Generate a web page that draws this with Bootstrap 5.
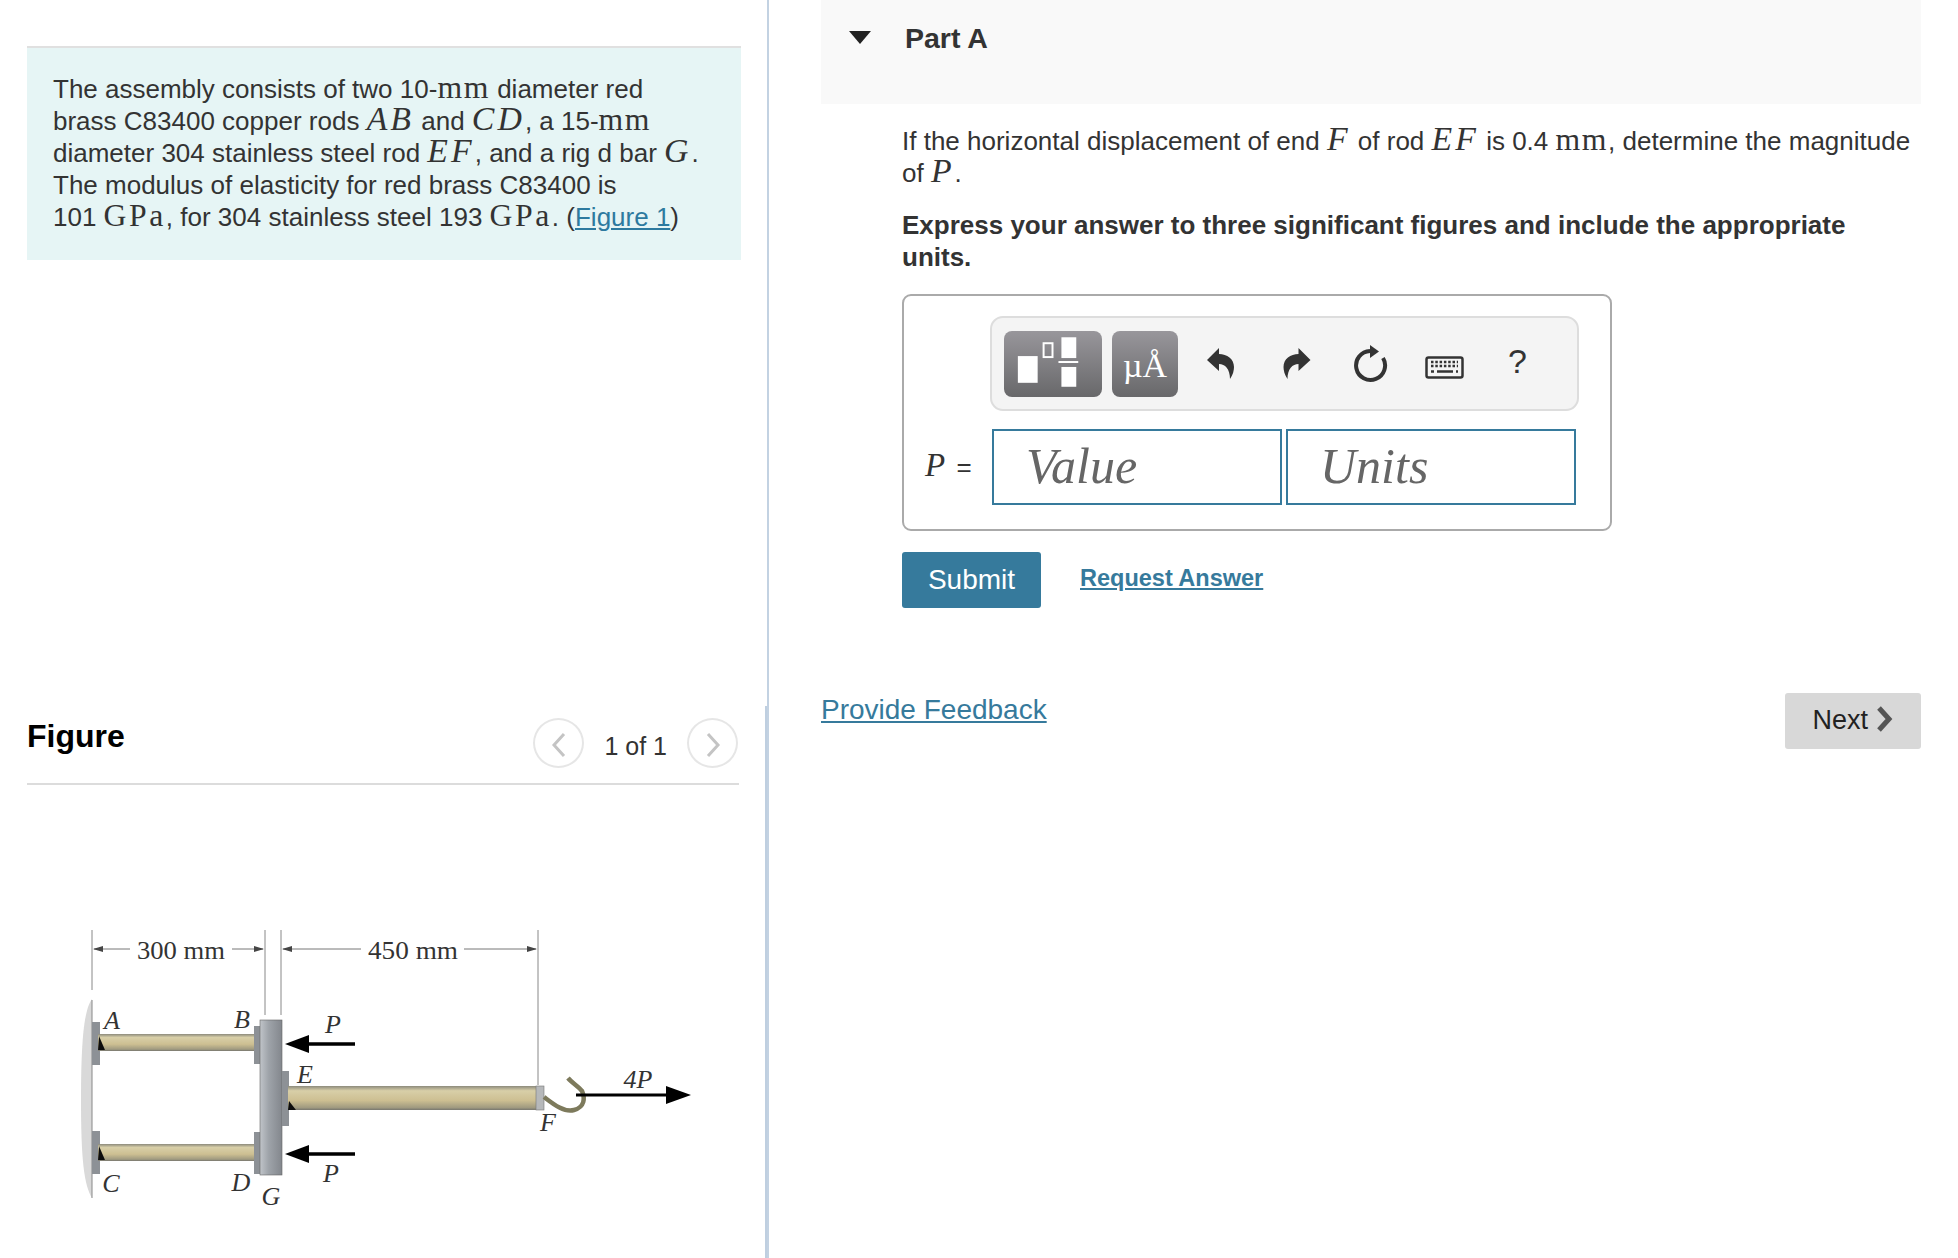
<!DOCTYPE html>
<html lang="en">
<head>
<meta charset="utf-8">
<title>Part A</title>
<link href="https://cdn.jsdelivr.net/npm/bootstrap@5.3.0/dist/css/bootstrap.min.css" rel="stylesheet">
<style>
html,body{height:100%}
body{font-family:"Liberation Sans",Arial,sans-serif;color:#333;font-size:26px;line-height:32px;background:#fff;overflow:hidden}
.stage{height:1258px}
.pane-left{width:769px;flex:none;padding:46px 0 0 27px;border-right:2px solid #c3d2e2;position:relative}
.pane-left::after{content:"";position:absolute;right:0;top:706px;bottom:0;width:2px;background:#bfcfe0}
.intro-box{width:714px;height:214px;background:#e6f5f5;border-top:2px solid #e0e0e0;padding:25px 26px}
.intro-box p{margin:0}
.mth{font-family:"Liberation Serif","Times New Roman",serif;font-size:1.22em;line-height:0;letter-spacing:.05em}
.mth-wide{letter-spacing:.08em}
.mvar{font-family:"Liberation Serif","Times New Roman",serif;font-style:italic;font-size:1.3em;letter-spacing:.09em;line-height:0}
.lnk{color:#2d7a9f;text-decoration:underline}
.fig-head{width:712px;height:100px;margin-top:425px;border-bottom:2px solid #dcdcdc;padding-bottom:15px}
.fig-title{font-weight:700;font-size:32px;color:#000;margin:0 0 14px;line-height:36px}
.pager-wrap{padding-right:1px}
.pager-btn{width:51px;height:50px;border:2px solid #e6e6e6;border-radius:50%;background:#fff;padding:0}
.pager-txt{margin:0 20px;font-size:25px;padding-top:6px}
.diagram{display:block;margin:125px 0 0 33px}
.pane-right{width:1189px;flex:none;padding:0 37px 0 52px}
.part-bar{height:104px;background:#f9f9f9;padding:20px 0 0 28px}
.tri-mark{margin-top:11px}
.part-title{font-size:28.500px;font-weight:700;color:#333;margin:0 0 0 34px;line-height:36px}
.part-body{padding:21px 4px 0 81px}
.part-body p{margin:0}
.emph{margin-top:20px!important;font-weight:700}
.answer-box{width:710px;height:237px;margin-top:21px;border:2px solid #aaa;border-radius:9px;padding:20px 0 0 21px}
.tool-strip{width:589px;height:95px;margin-left:65px;background:#f4f4f4;border:2px solid #ddd;border-radius:13px;padding:13px 12px}
.tool-btn{height:66px;border:0;border-radius:8px;background:linear-gradient(#98969b,#68686a);padding:0;color:#fff}
.tool-frac{width:98px}
.tool-unit{width:66px;margin-left:10px;font-family:"Liberation Serif",serif;font-size:34px;line-height:1;padding-top:5px}
.tool-ico{border:0;background:none;padding:0;line-height:0}
.eq-row{margin-top:18px}
.eq-lab{width:67px;font-size:26px;white-space:nowrap;line-height:1;margin-top:-4px}
.eq-lab i{font-family:"Liberation Serif",serif;font-size:33px;margin-right:4px}
.ans-input{width:290px!important;height:76px;flex:none;border:2px solid #367a9c;border-radius:0;font-family:"Liberation Serif",serif;font-style:italic;font-size:50px;padding:0 0 2px 32px;color:#666}
.ans-input::placeholder{color:#666;opacity:1}
.submit-btn{width:139px;height:56px;background:#367a9c;color:#fff;border:0;border-radius:3px;font-size:28px;line-height:32px;padding:0}
.req-link{font-size:23.500px;font-weight:700;margin:10px 0 0 39px;color:#367a9c}
.act-row{margin-top:21px}
.foot-row{margin-top:85px}
.fb-link{font-size:28px;color:#367a9c;margin-top:1px}
.next-btn{width:136px;height:56px;background:#d8d8d8;border:0;border-radius:3px;color:#222;font-size:27px;padding:0 0 2px}
.qmark{margin:-5px 0 0 44px;font-size:34px;line-height:1}
.ml-undo{margin-left:29px}.ml-redo{margin-left:49px}.ml-reset{margin-left:42px}.ml-key{margin-left:36px;margin-top:8px}
.chev{vertical-align:-3px}
</style>
</head>
<body>
<div class="stage d-flex">
  <div class="pane-left">
    <div class="intro-box">
      <p>The assembly consists of two 10-<span class="mth">mm</span> diameter red<br>
      brass C83400 copper rods <span class="mvar">AB</span> and <span class="mvar">CD</span>, a 15-<span class="mth">mm</span><br>
      diameter 304 stainless steel rod <span class="mvar">EF</span>, and a rig d bar <span class="mvar">G</span>.<br>
      The modulus of elasticity for red brass C83400 is<br>
      101 <span class="mth mth-wide">GPa</span>, for 304 stainless steel 193 <span class="mth mth-wide">GPa</span>. (<a class="lnk" href="#">Figure 1</a>)</p>
    </div>
    <div class="fig-head d-flex justify-content-between align-items-end">
      <h2 class="fig-title">Figure</h2>
      <div class="pager-wrap d-flex align-items-center">
        <button class="pager-btn" aria-label="Previous"><svg width="16" height="26" viewBox="0 0 16 26"><path d="M13 2 3 13l10 11" fill="none" stroke="#c4c4c4" stroke-width="3"/></svg></button>
        <span class="pager-txt">1 of 1</span>
        <button class="pager-btn" aria-label="Next"><svg width="16" height="26" viewBox="0 0 16 26"><path d="M3 2l10 11L3 24" fill="none" stroke="#c4c4c4" stroke-width="3"/></svg></button>
      </div>
    </div>
    <svg class="diagram" width="660" height="348" viewBox="0 0 660 348" font-family="Liberation Serif, serif">
      <defs>
        <linearGradient id="rod" x1="0" y1="0" x2="0" y2="1"><stop offset="0" stop-color="#8c8a7c"/><stop offset=".2" stop-color="#d8cfa8"/><stop offset=".6" stop-color="#cdbf92"/><stop offset=".9" stop-color="#a09a80"/><stop offset="1" stop-color="#77766e"/></linearGradient>
        <linearGradient id="plate" x1="0" y1="0" x2="1" y2="0"><stop offset="0" stop-color="#c0c4c9"/><stop offset=".4" stop-color="#9ea3a9"/><stop offset="1" stop-color="#83878d"/></linearGradient>
        <filter id="soft"><feGaussianBlur stdDeviation=".7"/></filter>
      </defs>
      <g filter="url(#soft)">
        <path d="M32 89C24 100 21 130 21 190s3 85 11 98Z" fill="#d9d9d9"/>
        <path d="M32 20v60M205 20v85M221 20v85M478 20v155M32 90v198" stroke="#888" stroke-width="1" fill="none"/>
        <path d="M34 39h36M172 39h31M223 39h78M404 39h72" stroke="#777" stroke-width="1" fill="none"/>
        <path d="M33 39l10-3v6ZM204 39l-10-3v6ZM222 39l10-3v6ZM477 39l-10-3v6Z" fill="#444"/>
        <rect x="32" y="112" width="8" height="43" fill="#8d9196"/><rect x="32" y="221" width="8" height="43" fill="#8d9196"/>
        <rect x="38" y="124" width="162" height="17" fill="url(#rod)"/><rect x="38" y="234" width="162" height="17" fill="url(#rod)"/>
        <rect x="194" y="116" width="7" height="38" fill="#8d9196"/><rect x="194" y="222" width="7" height="42" fill="#8d9196"/>
        <rect x="200" y="110" width="22" height="155" fill="url(#plate)" stroke="#666" stroke-width=".6"/>
        <rect x="222" y="161" width="7" height="55" fill="#8d9196"/>
        <rect x="228" y="176" width="250" height="24" fill="url(#rod)"/>
        <rect x="476" y="176" width="8" height="24" fill="#b6b8ba" stroke="#777" stroke-width=".6"/>
        <path d="M39 126l6 14h-7ZM39 236l6 14h-7ZM229 191l7 9h-8Z" fill="#111"/>
        <path d="M484 187c8 6 20 16 30 13 11-3 11-12 8-19-4-5-10-8-14-13" fill="none" stroke="#7d7a5c" stroke-width="4.500"/>
        <path d="M516 185h90" stroke="#000" stroke-width="3"/><path d="M631 185l-25-9v18Z" fill="#000"/>
        <path d="M295 134h-52" stroke="#000" stroke-width="3.400"/><path d="M225 134l24-9v18Z" fill="#000"/>
        <path d="M295 244h-52" stroke="#000" stroke-width="3.400"/><path d="M225 244l24-9v18Z" fill="#000"/>
      </g>
      <g fill="#333" font-size="26">
        <text x="77" y="49" textLength="88" lengthAdjust="spacingAndGlyphs">300 mm</text>
        <text x="308" y="49" textLength="90" lengthAdjust="spacingAndGlyphs">450 mm</text>
        <g font-style="italic" text-anchor="middle">
          <text x="52" y="119">A</text><text x="182" y="118">B</text><text x="273" y="123">P</text>
          <text x="245" y="173">E</text><text x="578" y="178">4P</text><text x="488" y="221">F</text>
          <text x="271" y="272">P</text><text x="51" y="282">C</text><text x="181" y="281">D</text><text x="211" y="295">G</text>
        </g>
      </g>
    </svg>
  </div>

  <div class="pane-right">
    <div class="part-bar d-flex align-items-start">
      <svg class="tri-mark" width="22" height="13" viewBox="0 0 22 13" aria-hidden="true"><path d="M0 0h22L11 13Z" fill="#222"/></svg>
      <h3 class="part-title">Part A</h3>
    </div>
    <div class="part-body">
      <p>If the horizontal displacement of end <span class="mvar">F</span> of rod <span class="mvar">EF</span> is 0.4 <span class="mth">mm</span>, determine the magnitude of <span class="mvar">P</span>.</p>
      <p class="emph">Express your answer to three significant figures and include the appropriate units.</p>

      <div class="answer-box">
        <div class="tool-strip d-flex align-items-center">
          <button class="tool-btn tool-frac" aria-label="Templates"><svg width="98" height="66" viewBox="0 0 99 66"><rect x="14" y="25" width="20" height="27" fill="#fff"/><rect x="40" y="12" width="9" height="14" fill="none" stroke="#fff" stroke-width="2"/><rect x="58" y="6" width="15" height="21" fill="#fff"/><rect x="55" y="30" width="20" height="2" fill="#fff"/><rect x="58" y="36" width="15" height="20" fill="#fff"/></svg></button>
          <button class="tool-btn tool-unit">µÅ</button>
          <button class="tool-ico ml-undo" aria-label="Undo"><svg width="27" height="32" viewBox="0 0 27 32"><path d="M12 0 0 12l12 11v-7c6 0 11 5 11 15 3-4 4-9 4-12C27 11 20 6 12 6Z" fill="#333"/></svg></button>
          <button class="tool-ico ml-redo" aria-label="Redo"><svg width="28" height="32" viewBox="0 0 27 32"><path d="M15 0l12 12-12 11v-7C9 16 4 21 4 31 1 27 0 22 0 19 0 11 7 6 15 6Z" fill="#333"/></svg></button>
          <button class="tool-ico ml-reset" aria-label="Reset"><svg width="36" height="38" viewBox="0 0 36 38"><path d="M30 13A14.500 14.500 0 1 1 17 6" fill="none" stroke="#333" stroke-width="4"/><path d="M17 0l9 6.500-9 6.500Z" fill="#333"/></svg></button>
          <button class="tool-ico ml-key" aria-label="Keyboard"><svg width="39" height="23" viewBox="0 0 39 23"><rect x="1.500" y="1.500" width="36" height="20" rx="2" fill="none" stroke="#333" stroke-width="2.500"/><path d="M6 6h27M6 10h27" stroke="#333" stroke-width="2.500" stroke-dasharray="2.500 1.800"/><path d="M6 15.500h3M12 15.500h16M31 15.500h2" stroke="#333" stroke-width="2.500"/></svg></button>
          <span class="qmark">?</span>
        </div>
        <div class="eq-row d-flex align-items-center">
          <div class="eq-lab"><i>P</i> =</div>
          <input class="form-control ans-input" placeholder="Value" aria-label="Value">
          <input class="form-control ans-input ms-1" placeholder="Units" aria-label="Units">
        </div>
      </div>

      <div class="act-row d-flex align-items-start">
        <button class="submit-btn">Submit</button>
        <a class="req-link" href="#">Request Answer</a>
      </div>
    </div>
    <div class="foot-row d-flex justify-content-between align-items-start">
      <a class="fb-link" href="#">Provide Feedback</a>
      <button class="next-btn">Next <svg class="chev" width="18" height="26" viewBox="0 0 18 26"><path d="M3 2l10 11L3 24" fill="none" stroke="#555" stroke-width="5"/></svg></button>
    </div>
  </div>
</div>
<script src="https://cdn.jsdelivr.net/npm/bootstrap@5.3.0/dist/js/bootstrap.bundle.min.js"></script>
</body>
</html>
